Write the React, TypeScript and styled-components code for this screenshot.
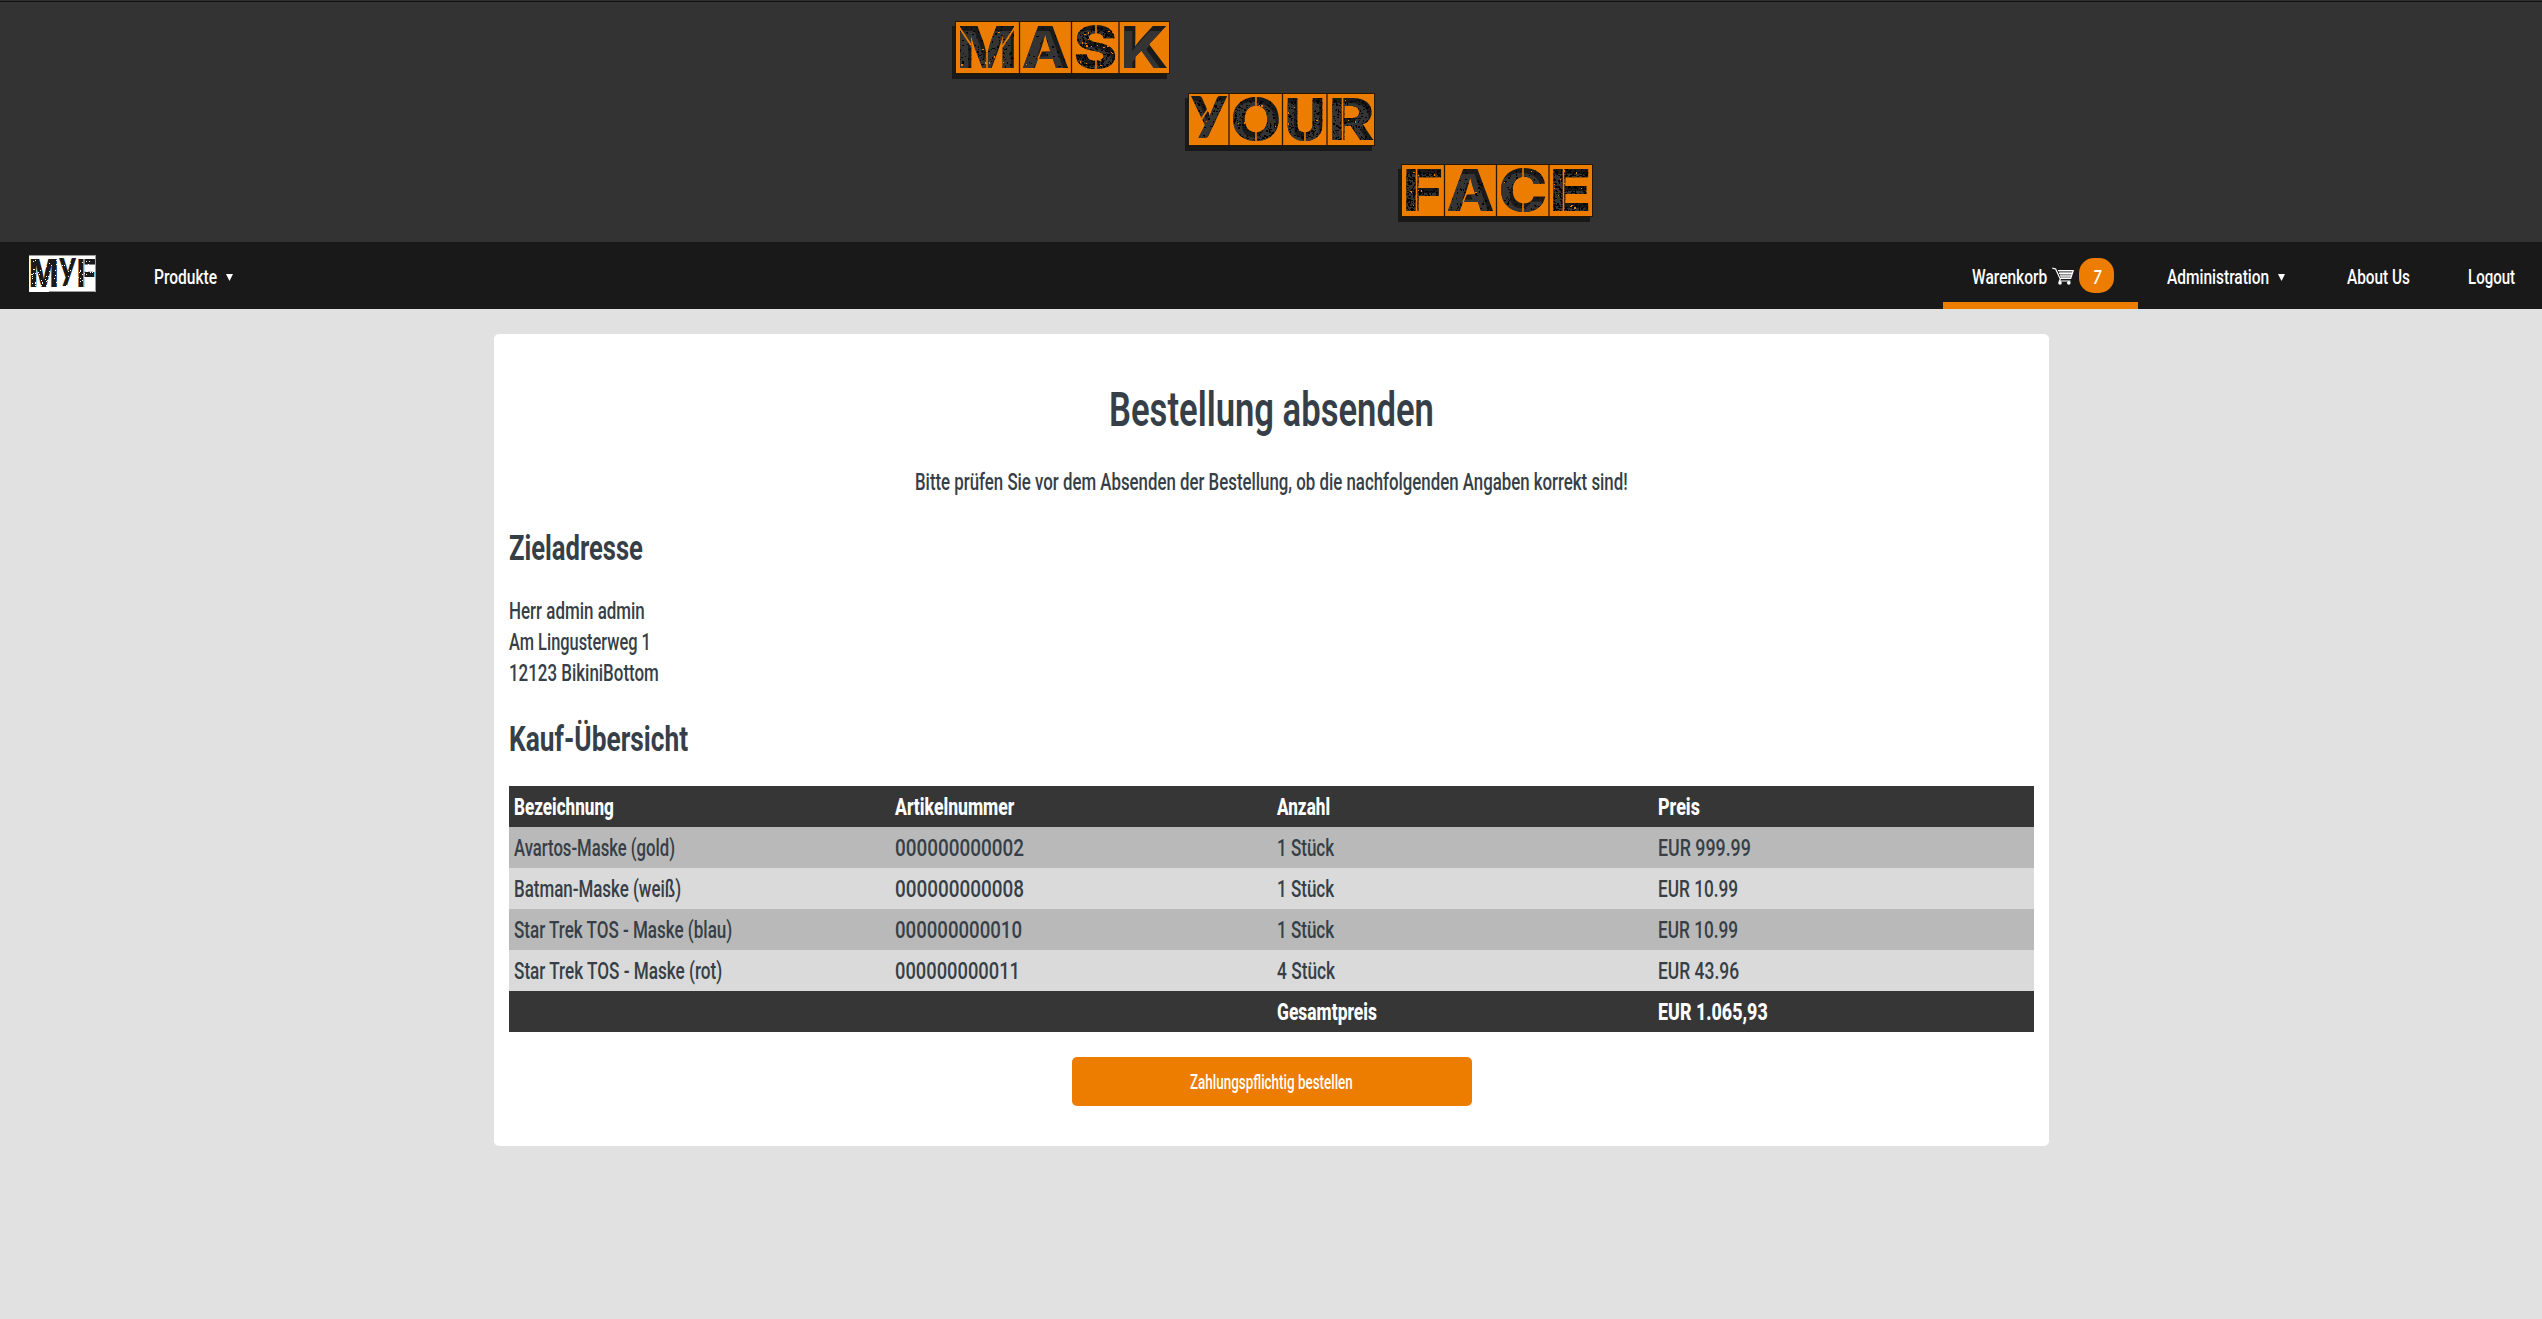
import React, { useLayoutEffect, useRef, useState } from "react";
import styled, { createGlobalStyle } from "styled-components";

const ORANGE = "#ed7d00";
const INK = "#363f47";

const GlobalStyle = createGlobalStyle`
  html, body { margin: 0; padding: 0; }
  body {
    background: #e1e1e1;
    color: ${INK};
    font-family: Roboto, "Liberation Sans", sans-serif;
    font-weight: 500;
  }
  *, *::before, *::after { box-sizing: border-box; }
`;

/* ---------- condensed text ---------- */

const FitBox = styled.span<{ $w: number; $size: number }>`
  display: block;
  flex: none;
  width: ${(p) => p.$w}px;
  font-size: ${(p) => p.$size * 1.139}px;
  line-height: ${(p) => Math.floor(p.$size * 1.482)}px;
  white-space: pre;
`;

const FitInner = styled.span`
  display: inline-block;
  vertical-align: top;
  transform-origin: 0 50%;
`;

type FitProps = { w: number; size: number; children: string };

/* Sets a line of text in a condensed cut: squeezed to the given width. */
function Fit({ w, size, children }: FitProps) {
  const ref = useRef<HTMLSpanElement>(null);
  const [scale, setScale] = useState(0.8);
  useLayoutEffect(() => {
    if (ref.current) setScale(w / ref.current.offsetWidth);
  }, [w, children]);
  return (
    <FitBox $w={w} $size={size}>
      <FitInner ref={ref} style={{ transform: `translateY(0.056em) scaleX(${scale})` }}>
        {children}
      </FitInner>
    </FitBox>
  );
}

/* ---------- stencil lettering ---------- */

type Glyph = { ch: string; x: number; w: number; grit: number };
type Cut = [number, number, number, number];

function random(seed: number) {
  let s = seed;
  return () => {
    s = (s * 16807) % 2147483647;
    return s / 2147483647;
  };
}

type StencilProps = {
  id: string;
  width: number;
  height: number;
  glyphs: Glyph[];
  dividers: number[];
  cuts: Cut[];
  top: number;
  cap: number;
  plain?: boolean;
};

const LogoSvg = styled.svg`
  display: block;
  overflow: visible;
  flex: none;
`;

function Stencil({ id, width, height, glyphs, dividers, cuts, top, cap, plain }: StencilProps) {
  const paper = plain ? "#ffffff" : ORANGE;
  const letter = (g: Glyph, i: number) => {
    const isY = g.ch === "y";
    const size = isY ? cap / 0.7 : cap / 0.727;
    return (
      <text
        key={i}
        x={g.x - (isY ? 0 : 1.5)}
        y={isY ? top + size * 0.506 : top + cap}
        fontFamily={isY ? "Lato, sans-serif" : "Inter, sans-serif"}
        fontWeight={isY ? 900 : 800}
        fontSize={size}
        textLength={g.w + (isY ? 0 : 3)}
        lengthAdjust="spacingAndGlyphs"
      >
        {g.ch}
      </text>
    );
  };
  const next = random(width * 37 + 11);
  const specks: React.ReactElement[] = [];
  glyphs.forEach((g, gi) => {
    for (let k = 0; k < g.grit; k++) {
      const x = g.x + next() * g.w;
      const y = top + next() * cap;
      const light = next() > 0.96;
      specks.push(
        <rect
          key={`${gi}-${k}`}
          x={Math.round(x)}
          y={Math.round(y)}
          width={!plain && next() > 0.6 ? 2 : 1}
          height={!plain && next() > 0.7 ? 2 : 1}
          fill={plain || light ? paper : "#050505"}
        />
      );
    }
  });
  return (
    <LogoSvg width={width} height={height} viewBox={`0 0 ${width} ${height}`}>
      {!plain && <clipPath id={id}>{glyphs.map(letter)}</clipPath>}
      {!plain && <rect x={-3} y={5} width={width} height={height} fill="#191919" />}
      <rect width={width} height={height} fill={paper} />
      {!plain && (
        <rect x={0.5} y={0.5} width={width - 1} height={height - 1} fill="none" stroke="#2a1700" />
      )}
      {dividers.map((d) => (
        <path key={d} d={`M${d} 0V${height}`} stroke="#2a1700" strokeWidth={1.3} />
      ))}
      <g fill="#1a1a1a">{glyphs.map(letter)}</g>
      {plain ? (
        specks
      ) : (
        <g clipPath={`url(#${id})`}>
          <g fill="#343434" transform="translate(-3 5)">
            {glyphs.map(letter)}
          </g>
          {specks}
        </g>
      )}
      {cuts.map(([x1, y1, x2, y2], i) => (
        <path key={i} d={`M${x1} ${y1}L${x2} ${y2}`} stroke={paper} strokeWidth={plain ? 1 : 1.6} />
      ))}
      {plain && <path d={`M0 .5H${width}M20 ${height - 0.5}H${width - 0.5}V0`} fill="none" stroke="#9a9a9a" />}
    </LogoSvg>
  );
}

/* ---------- header ---------- */

const Header = styled.header`
  height: 242px;
  padding-top: 21px;
  background: #333333;
  box-shadow: inset 0 1px 0 #2e2e2e, inset 0 2px 0 #111111;
`;

const Banner = styled.h1`
  display: flex;
  flex-direction: column;
  gap: 18.5px;
  width: 638px;
  margin: 0 0 0 955px;
`;

const Word = styled.span<{ $indent: number }>`
  display: flex;
  height: 53px;
  padding-left: ${(p) => p.$indent}px;
`;

/* ---------- navigation ---------- */

const Nav = styled.nav`
  display: flex;
  justify-content: space-between;
  height: 67px;
  background: #191919;
  color: #ffffff;
`;

const NavGroup = styled.div`
  display: flex;
`;

const NavItem = styled.a<{ $w?: number; $active?: boolean }>`
  display: flex;
  align-items: center;
  width: ${(p) => (p.$w ? `${p.$w}px` : "auto")};
  padding: 7px 0 0 29px;
  border-bottom: 7px solid ${(p) => (p.$active ? ORANGE : "transparent")};
  color: inherit;
  text-decoration: none;
`;

const HomeLink = styled.a`
  display: flex;
  width: 125px;
  padding: 13px 0 0 29px;
`;

const Caret = styled.span`
  width: 7px;
  height: 7px;
  margin: 4px 0 0 9px;
  background: #ffffff;
  clip-path: polygon(0 0, 100% 0, 50% 100%);
`;

const Badge = styled.span`
  display: flex;
  flex: none;
  align-items: center;
  justify-content: center;
  width: 35px;
  height: 35px;
  margin: 0 0 0 5px;
  border-radius: 15px;
  background: ${ORANGE};
  font-style: italic;
`;

const CartSvg = styled.svg`
  flex: none;
  margin: 0 0 0 5px;
`;

const Cart = () => (
  <CartSvg width="22" height="18" viewBox="0 0 22 18" fill="none">
    <path d="M7 4.5H21L18.6 11H9Z" fill="#8f8f8f" />
    <path
      d="M.3 1.2L3.6 1.9L8.3 12L7.4 14H18.5M6 3.7H21.2L18.7 11.4H8.4M7 6.4H20M8 9H19.4"
      stroke="#fff"
      strokeWidth="1.2"
    />
    <circle cx="8" cy="15.9" r="1.8" fill="#fff" />
    <circle cx="16.8" cy="15.9" r="1.8" fill="#fff" />
  </CartSvg>
);

/* ---------- order card ---------- */

const Card = styled.main`
  display: flex;
  flex-direction: column;
  width: 1555px;
  height: 812px;
  margin: 25px 0 0 494px;
  padding: 42px 15px 0;
  border-radius: 5px;
  background: #ffffff;
`;

const Title = styled.h1`
  align-self: center;
  margin: 0;
  font-weight: 600;
`;

const Intro = styled.p`
  align-self: center;
  margin: 28px 0 26px;
`;

const Subtitle = styled.h2`
  margin: 0;
  font-weight: 700;
`;

const Address = styled.address`
  margin: 26px 0;
  font-style: normal;
`;

const Table = styled.div`
  margin-top: 26px;
`;

const Row = styled.div<{ $kind: "bar" | "odd" | "even" }>`
  display: grid;
  grid-template-columns: repeat(4, 1fr);
  align-items: center;
  height: 41px;
  background: ${(p) => ({ bar: "#363636", odd: "#b9b9b9", even: "#dadada" })[p.$kind]};
  color: ${(p) => (p.$kind === "bar" ? "#ffffff" : INK)};
  font-weight: ${(p) => (p.$kind === "bar" ? 800 : "inherit")};
`;

const CellBox = styled.div`
  padding-left: 5px;
`;

const OrderButton = styled.button`
  display: flex;
  align-items: center;
  justify-content: center;
  align-self: center;
  width: 400px;
  height: 49px;
  margin: 25px 0 0;
  padding: 0;
  border: 0;
  border-radius: 5px;
  background: ${ORANGE};
  color: #ffffff;
  font-family: inherit;
  font-weight: 500;
`;

type Cell = [string, number];

const items: Cell[][] = [
  [["Avartos-Maske (gold)", 161], ["000000000002", 129], ["1 Stück", 57], ["EUR 999.99", 93]],
  [["Batman-Maske (weiß)", 167], ["000000000008", 129], ["1 Stück", 57], ["EUR 10.99", 80]],
  [["Star Trek TOS - Maske (blau)", 218], ["000000000010", 127], ["1 Stück", 57], ["EUR 10.99", 80]],
  [["Star Trek TOS - Maske (rot)", 208], ["000000000011", 125], ["4 Stück", 58], ["EUR 43.96", 81]],
];

const head: Cell[] = [["Bezeichnung", 100], ["Artikelnummer", 119], ["Anzahl", 53], ["Preis", 42]];
const total: Cell[] = [["", 0], ["", 0], ["Gesamtpreis", 100], ["EUR 1.065,93", 110]];

const cells = (row: Cell[]) =>
  row.map(([text, w], i) => (
    <CellBox key={i}>
      {text && (
        <Fit size={21} w={w}>
          {text}
        </Fit>
      )}
    </CellBox>
  ));

export default function App() {
  return (
    <>
      <GlobalStyle />
      <Header>
        <Banner>
          <Word $indent={0}>
            <Stencil
              id="mask"
              width={215}
              height={53}
              top={5}
              cap={42}
              dividers={[64.5, 116.5, 164]}
              glyphs={[
                { ch: "M", x: 3, w: 58, grit: 150 },
                { ch: "A", x: 68, w: 45, grit: 60 },
                { ch: "S", x: 120, w: 41, grit: 420 },
                { ch: "K", x: 167, w: 45, grit: 0 },
              ]}
              cuts={[
                [4, 6, 16, 24],
                [60, 6, 47, 26],
                [32, 32, 32, 48],
                [83, 38, 88, 26],
                [141, 4, 141, 16],
                [141, 36, 141, 49],
              ]}
            />
          </Word>
          <Word $indent={233}>
            <Stencil
              id="your"
              width={187}
              height={53}
              top={5}
              cap={42}
              dividers={[41, 94.5, 139]}
              glyphs={[
                { ch: "y", x: 3, w: 36, grit: 130 },
                { ch: "O", x: 44, w: 48, grit: 240 },
                { ch: "U", x: 98, w: 38, grit: 240 },
                { ch: "R", x: 142, w: 43, grit: 240 },
              ]}
              cuts={[
                [13, 27, 22, 13],
                [68, 3, 68, 15],
                [68, 37, 68, 49],
                [117, 37, 117, 49],
                [154.5, 4, 154.5, 48],
              ]}
            />
          </Word>
          <Word $indent={446}>
            <Stencil
              id="face"
              width={192}
              height={53}
              top={5}
              cap={42}
              dividers={[43.5, 95.5, 148]}
              glyphs={[
                { ch: "F", x: 3, w: 38, grit: 420 },
                { ch: "A", x: 47, w: 45, grit: 100 },
                { ch: "C", x: 99, w: 46, grit: 130 },
                { ch: "E", x: 150, w: 39, grit: 500 },
              ]}
              cuts={[
                [15.5, 4, 15.5, 48],
                [62, 38, 67, 26],
                [122, 3, 122, 15],
                [122, 37, 122, 49],
                [162.5, 4, 162.5, 48],
              ]}
            />
          </Word>
        </Banner>
      </Header>

      <Nav>
        <NavGroup>
          <HomeLink>
            <Stencil
              id="myf"
              width={67}
              height={37}
              top={4}
              cap={28}
              plain
              dividers={[]}
              glyphs={[
                { ch: "M", x: 1.5, w: 26.5, grit: 50 },
                { ch: "y", x: 30, w: 17, grit: 20 },
                { ch: "F", x: 49, w: 17, grit: 35 },
              ]}
              cuts={[[55, 3, 55, 33]]}
            />
          </HomeLink>
          <NavItem>
            <Fit size={18} w={63}>Produkte</Fit>
            <Caret />
          </NavItem>
        </NavGroup>
        <NavGroup>
          <NavItem $w={195} $active>
            <Fit size={18} w={75}>Warenkorb</Fit>
            <Cart />
            <Badge>
              <Fit size={18} w={8}>7</Fit>
            </Badge>
          </NavItem>
          <NavItem $w={180}>
            <Fit size={18} w={102}>Administration</Fit>
            <Caret />
          </NavItem>
          <NavItem $w={121}>
            <Fit size={18} w={63}>About Us</Fit>
          </NavItem>
          <NavItem $w={103}>
            <Fit size={18} w={47}>Logout</Fit>
          </NavItem>
        </NavGroup>
      </Nav>

      <Card>
        <Title>
          <Fit size={42} w={325}>Bestellung absenden</Fit>
        </Title>
        <Intro>
          <Fit size={21} w={713}>
            Bitte prüfen Sie vor dem Absenden der Bestellung, ob die nachfolgenden Angaben korrekt sind!
          </Fit>
        </Intro>
        <Subtitle>
          <Fit size={31.5} w={134}>Zieladresse</Fit>
        </Subtitle>
        <Address>
          <Fit size={21} w={136}>Herr admin admin</Fit>
          <Fit size={21} w={142}>Am Lingusterweg 1</Fit>
          <Fit size={21} w={150}>12123 BikiniBottom</Fit>
        </Address>
        <Subtitle>
          <Fit size={31.5} w={179}>Kauf-Übersicht</Fit>
        </Subtitle>
        <Table>
          <Row $kind="bar">{cells(head)}</Row>
          {items.map((row, i) => (
            <Row key={i} $kind={i % 2 ? "even" : "odd"}>
              {cells(row)}
            </Row>
          ))}
          <Row $kind="bar">{cells(total)}</Row>
        </Table>
        <OrderButton>
          <Fit size={17} w={163}>Zahlungspflichtig bestellen</Fit>
        </OrderButton>
      </Card>
    </>
  );
}
